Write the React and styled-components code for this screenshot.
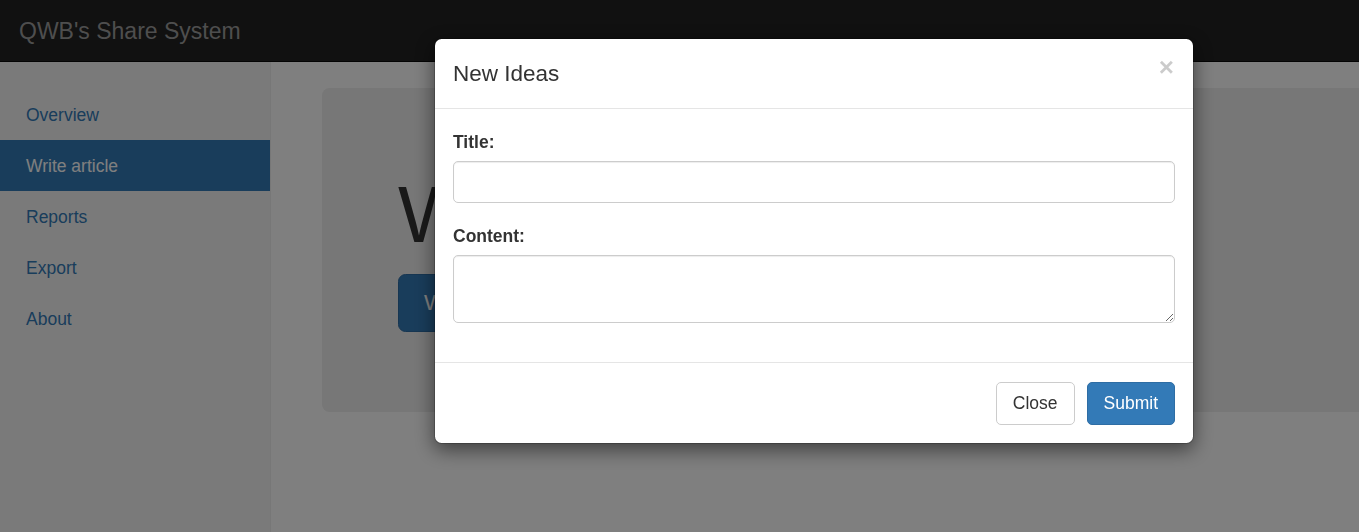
import React from 'react';
import styled, { createGlobalStyle } from 'styled-components';

// Global

const GlobalStyle = createGlobalStyle`
  html, body {
    margin: 0;
    padding: 0;
    height: 100%;
    overflow: hidden;
    background: #fff;
    font-family: "Liberation Sans", Arial, sans-serif;
    font-size: 17.5px;
    color: #333;
  }
  * {
    box-sizing: border-box;
  }
`;

// Page

const Page = styled.div`
  width: 100vw;
  height: 100vh;
  display: flex;
  flex-direction: column;
`;

const Navbar = styled.header`
  height: 62px;
  flex-shrink: 0;
  background: #222;
  border-bottom: 1px solid #080808;
  display: flex;
  align-items: center;
  padding-left: 19px;
`;

const Brand = styled.a`
  color: #9d9d9d;
  font-size: 23px;
  line-height: 1;
  padding-top: 1px;
  text-decoration: none;
`;

const Body = styled.div`
  flex: 1;
  display: flex;
  min-height: 0;
`;

const Sidebar = styled.nav`
  width: 271px;
  flex-shrink: 0;
  background: #f5f5f5;
  border-right: 1px solid #eee;
  padding-top: 27px;
`;

const NavList = styled.ul`
  list-style: none;
  margin: 0;
  padding: 0;
`;

const NavItem = styled.li`
  height: 51px;
  width: 270px;
  display: flex;
  align-items: center;
  padding-left: 26px;
  padding-top: 2px;
  font-size: 17.5px;
  color: ${(props) => (props.active ? '#fff' : '#337ab7')};
  background: ${(props) => (props.active ? '#337ab7' : 'transparent')};
`;

const Main = styled.main`
  flex: 1;
  padding: 26px 0 0 51px;
  min-width: 0;
`;

const Jumbotron = styled.section`
  width: calc(100% + 60px);
  height: 324px;
  background: #eee;
  border-radius: 7.5px;
  padding: 84px 75px 0 76px;
`;

const Heading = styled.h1`
  margin: 0 0 15px;
  font-size: 79px;
  font-weight: 500;
  line-height: 1.1;
  color: #333;
`;

const BigButton = styled.button`
  height: 58px;
  padding: 0 25px;
  font-family: inherit;
  font-size: 22.5px;
  color: #fff;
  background: #337ab7;
  border: 1px solid #2e6da4;
  border-radius: 7.5px;
`;

// Modal

const Backdrop = styled.div`
  position: fixed;
  inset: 0;
  background: rgba(0, 0, 0, 0.5);
`;

const Dialog = styled.div`
  position: fixed;
  top: 38px;
  left: 434px;
  width: 760px;
  background: #fff;
  border: 1px solid rgba(0, 0, 0, 0.2);
  border-radius: 7.5px;
  box-shadow: 0 6px 19px rgba(0, 0, 0, 0.5);
  background-clip: padding-box;
`;

const ModalHeader = styled.div`
  display: flex;
  align-items: flex-start;
  justify-content: space-between;
  padding: 19px 18px 18px;
  border-bottom: 1px solid #e5e5e5;
`;

const ModalTitle = styled.h4`
  margin: 0;
  font-size: 22.5px;
  font-weight: 500;
  line-height: 32px;
  color: #333;
`;

const CloseX = styled.button`
  border: 0;
  background: transparent;
  padding: 0;
  margin-top: -4px;
  margin-right: 1px;
  font-family: inherit;
  font-size: 26px;
  font-weight: bold;
  line-height: 1;
  color: #000;
  opacity: 0.2;
`;

const ModalBody = styled.div`
  padding: 21px 18px 18px;
`;

const FormGroup = styled.div`
  margin-bottom: 21px;
`;

const Label = styled.label`
  display: block;
  font-weight: bold;
  font-size: 17.5px;
  line-height: 25px;
  margin-bottom: 6px;
`;

const Input = styled.input`
  display: block;
  width: 100%;
  height: 42px;
  border: 1px solid #ccc;
  border-radius: 5px;
  box-shadow: inset 0 1px 1px rgba(0, 0, 0, 0.075);
  font-family: inherit;
  font-size: 17.5px;
  padding: 7px 15px;
`;

const TextArea = styled.textarea`
  display: block;
  width: 100%;
  height: 68px;
  border: 1px solid #ccc;
  border-radius: 5px;
  box-shadow: inset 0 1px 1px rgba(0, 0, 0, 0.075);
  font-family: inherit;
  font-size: 17.5px;
  padding: 7px 15px;
  resize: vertical;
`;

const ModalFooter = styled.div`
  display: flex;
  justify-content: flex-end;
  gap: 12px;
  padding: 19px 18px 18px;
  border-top: 1px solid #e5e5e5;
`;

const Button = styled.button`
  height: 43px;
  padding: 0 16px;
  font-family: inherit;
  font-size: 17.5px;
  border-radius: 5px;
  color: ${(props) => (props.primary ? '#fff' : '#333')};
  background: ${(props) => (props.primary ? '#337ab7' : '#fff')};
  border: 1px solid ${(props) => (props.primary ? '#2e6da4' : '#ccc')};
`;

const links = ['Overview', 'Write article', 'Reports', 'Export', 'About'];

function App() {
  return (
    <>
      <GlobalStyle />
      <Page>
        <Navbar>
          <Brand>QWB's Share System</Brand>
        </Navbar>
        <Body>
          <Sidebar>
            <NavList>
              {links.map((l) => (
                <NavItem key={l} active={l === 'Write article'}>
                  {l}
                </NavItem>
              ))}
            </NavList>
          </Sidebar>
          <Main>
            <Jumbotron>
              <Heading>Write your ideas</Heading>
              <BigButton>Write a new article</BigButton>
            </Jumbotron>
          </Main>
        </Body>
      </Page>
      <Backdrop />
      <Dialog>
        <ModalHeader>
          <ModalTitle>New Ideas</ModalTitle>
          <CloseX>×</CloseX>
        </ModalHeader>
        <ModalBody>
          <FormGroup>
            <Label>Title:</Label>
            <Input type="text" />
          </FormGroup>
          <FormGroup>
            <Label>Content:</Label>
            <TextArea />
          </FormGroup>
        </ModalBody>
        <ModalFooter>
          <Button>Close</Button>
          <Button primary>Submit</Button>
        </ModalFooter>
      </Dialog>
    </>
  );
}

export default App;
